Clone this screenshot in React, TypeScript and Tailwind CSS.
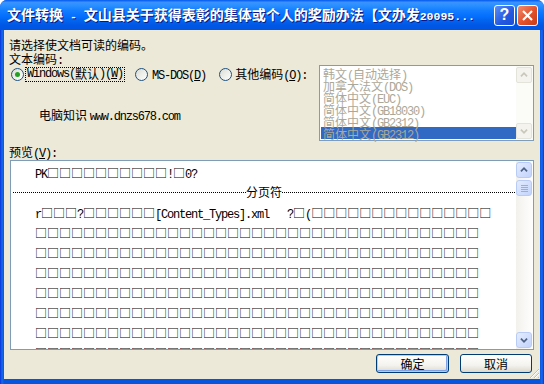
import React from "react";

const ascii = "font-['Liberation_Mono',monospace] text-[12px] tracking-[-1.2px]";
const cjk = "font-['Noto_Sans_CJK_SC',sans-serif] text-[12px]";

// splits a string into ascii / cjk runs so each gets its own width
const Mix = ({ s, a = ascii, c = cjk }: { s: string; a?: string; c?: string }) => {
  const parts = s.match(/[\x00-\x7f]+|[^\x00-\x7f]+/g) || [];
  return (
    <>
      {parts.map((p, i) => (
        <span key={i} className={/^[\x00-\x7f]/.test(p) ? a : c}>
          {p}
        </span>
      ))}
    </>
  );
};

const Radio = ({ checked = false }: { checked?: boolean }) => (
  <span className="w-[13px] h-[13px] rounded-full border border-[#1c5180] bg-[linear-gradient(135deg,#dcdcd5,#ffffff)] flex items-center justify-center shrink-0">
    {checked && <span className="w-[5px] h-[5px] rounded-full bg-[#21a121]" />}
  </span>
);

const Chevron = ({ up, color }: { up?: boolean; color: string }) => (
  <svg width="16" height="16" viewBox="0 0 16 16">
    <polyline
      points={up ? "4.5,9.5 8,6 11.5,9.5" : "4.5,6.5 8,10 11.5,6.5"}
      fill="none"
      stroke={color}
      strokeWidth="2"
    />
  </svg>
);

const box = (n: number) => "□".repeat(n);

export default function App() {
  const rows = [box(37), box(37), box(37), box(37), box(37), box(37), box(37)];
  const items = ["韩文(自动选择)", "加拿大法文(DOS)", "简体中文(EUC)", "简体中文(GB18030)", "简体中文(GB2312)"];

  return (
    <div className="w-[544px] h-[384px] flex flex-col bg-[linear-gradient(to_right,#0831d9,#166aee_2px,#0855dd_4px,#0855dd_540px,#166aee_542px,#0831d9)] rounded-t-[7px] overflow-hidden">
      {/* title bar */}
      <div className="h-[30px] shrink-0 flex items-center pl-[7px] pr-[6px] bg-[linear-gradient(to_bottom,#0058ee_0%,#3a93ff_8%,#288eff_20%,#127dff_35%,#036ffc_55%,#0262ee_70%,#0057e5_85%,#0054e3_100%)]">
        <div className="flex-1 whitespace-nowrap overflow-hidden text-white leading-[22px] [text-shadow:1px_1px_0_#0a1883]">
          <Mix
            s="文件转换 -  文山县关于获得表彰的集体或个人的奖励办法【文办发20095..."
            a="font-['Liberation_Mono',monospace] text-[11.5px] font-bold"
            c="font-['Noto_Sans_CJK_SC',sans-serif] text-[14px] font-bold"
          />
        </div>
        <div className="flex gap-[2px] ml-[6px]">
          <div className="w-[21px] h-[21px] rounded-[3px] border border-white bg-[linear-gradient(135deg,#5b8ff5,#2358e0_60%,#1d4fd6)] flex items-center justify-center text-white font-['Liberation_Sans',sans-serif] font-bold text-[16px] leading-none">
            ?
          </div>
          <div className="w-[21px] h-[21px] rounded-[3px] border border-white bg-[linear-gradient(135deg,#f08d6e,#e2502a_55%,#c83c17)] flex items-center justify-center">
            <svg width="13" height="13" viewBox="0 0 13 13">
              <path d="M2 2L11 11M11 2L2 11" stroke="white" strokeWidth="2.2" />
            </svg>
          </div>
        </div>
      </div>

      {/* client */}
      <div className="relative flex-1 mx-[4px] mb-[5px] bg-[#ece9d8] flex flex-col pl-[5px] pr-[6px] text-black leading-[14px]">
        <div className="mt-[7px] h-[14px]">
          <Mix s="请选择使文档可读的编码。" />
        </div>
        <div className="h-[14px]">
          <Mix s="文本编码:" />
        </div>

        <div className="flex h-[76px]">
          <div className="flex-1 flex flex-col">
            <div className="mt-[2px] h-[14px] flex items-center">
              <span className="ml-[2px]">
                <Radio checked />
              </span>
              <span className="ml-[1px] border border-dotted border-black px-[1px] h-[15px] flex items-center whitespace-nowrap">
                <span className={ascii}>Windows(</span>
                <span className={cjk}>默认</span>
                <span className={ascii}>)(</span>
                <span className={ascii + " underline"}>W</span>
                <span className={ascii}>)</span>
              </span>
              <span className="ml-[10px]">
                <Radio />
              </span>
              <span className="ml-[4px] whitespace-nowrap">
                <span className={ascii}>MS-DOS(</span>
                <span className={ascii + " underline"}>D</span>
                <span className={ascii}>)</span>
              </span>
              <span className="ml-[13px]">
                <Radio />
              </span>
              <span className="ml-[3px] whitespace-nowrap">
                <span className={cjk}>其他编码</span>
                <span className={ascii}>(</span>
                <span className={ascii + " underline"}>O</span>
                <span className={ascii}>):</span>
              </span>
            </div>
            <div className="mt-[27px] ml-[30px] h-[12px] leading-[12px] whitespace-nowrap">
              <span className={cjk}>电脑知识 </span>
              <span className={ascii}>www.dnzs678.com</span>
            </div>
          </div>

          {/* disabled listbox */}
          <div className="w-[215px] h-[76px] border border-[#7f9db9] bg-white flex">
            <div className="flex-1 pt-[1px] pl-[1px] text-[#aca899] leading-[12px]">
              {items.map((t) => (
                <div key={t} className="h-[12px] pl-[2px] whitespace-nowrap">
                  <Mix s={t} />
                </div>
              ))}
              <div className="h-[12px] pl-[2px] whitespace-nowrap bg-[#316ac5]">
                <Mix s="简体中文(GB2312)" />
              </div>
            </div>
            <div className="w-[17px] bg-[#fbfbf8] flex flex-col justify-between py-[1px]">
              <div className="w-[16px] h-[16px] rounded-[2px] border border-[#e4e3da] bg-[#f4f3ee] flex items-center justify-center">
                <Chevron up color="#c9c7ba" />
              </div>
              <div className="w-[16px] h-[16px] rounded-[2px] border border-[#e4e3da] bg-[#f4f3ee] flex items-center justify-center">
                <Chevron color="#c9c7ba" />
              </div>
            </div>
          </div>
        </div>

        <div className="mt-[3px] h-[14px]">
          <span className={cjk}>预览</span>
          <span className={ascii}>(</span>
          <span className={ascii + " underline"}>V</span>
          <span className={ascii}>):</span>
        </div>

        {/* preview */}
        <div className="mt-[2px] ml-[1px] h-[190px] border border-[#7f9db9] bg-white flex">
          <div className="flex-1 overflow-hidden pt-[1px] pl-[24px] leading-[20px] whitespace-pre">
            <div className="h-[20px]">
              <Mix s={"PK" + box(10) + "!" + box(1) + "0?"} />
            </div>
            <div className="h-[20px] -ml-[22px] mr-[1px] flex items-center">
              <div className="flex-1 border-t border-dotted border-black" />
              <span className={cjk}>分页符</span>
              <div className="flex-1 border-t border-dotted border-black" />
            </div>
            <div className="h-[20px]">
              <Mix s={"r" + box(3) + "?" + box(6) + "[Content_Types].xml   ?" + box(1) + "(" + box(15)} />
            </div>
            {rows.map((r, i) => (
              <div key={i} className="h-[20px]">
                <Mix s={r} />
              </div>
            ))}
          </div>
          <div className="w-[17px] bg-[linear-gradient(to_right,#f3f1ec,#fefefe)] flex flex-col py-[1px]">
            <div className="w-[16px] h-[16px] rounded-[3px] border border-[#b8cbf6] bg-[linear-gradient(135deg,#e4ecfe,#c2d3fc)] flex items-center justify-center">
              <Chevron up color="#4d6185" />
            </div>
            <div className="mt-[2px] w-[16px] h-[16px] rounded-[3px] border border-[#b8cbf6] bg-[linear-gradient(135deg,#e4ecfe,#c2d3fc)] flex flex-col items-center justify-center gap-[1px]">
              <div className="w-[7px] h-[1px] bg-[#8cb0f8]" />
              <div className="w-[7px] h-[1px] bg-[#8cb0f8]" />
              <div className="w-[7px] h-[1px] bg-[#8cb0f8]" />
              <div className="w-[7px] h-[1px] bg-[#8cb0f8]" />
            </div>
            <div className="flex-1" />
            <div className="w-[16px] h-[16px] rounded-[3px] border border-[#b8cbf6] bg-[linear-gradient(135deg,#e4ecfe,#c2d3fc)] flex items-center justify-center">
              <Chevron color="#4d6185" />
            </div>
          </div>
        </div>

        {/* buttons */}
        <div className="mt-[4px] mr-[2px] flex justify-end gap-[11px]">
          <button className="w-[73px] h-[19px] rounded-[3px] border border-[#003c74] bg-[linear-gradient(to_bottom,#ffffff,#f4f3ee_60%,#dcd8cb)] shadow-[inset_0_0_0_1px_#b5cdf5,inset_-1px_-1px_0_1px_#7da2ea] flex items-center justify-center leading-none">
            <span className={cjk}>确定</span>
          </button>
          <button className="w-[72px] h-[19px] rounded-[3px] border border-[#003c74] bg-[linear-gradient(to_bottom,#ffffff,#f4f3ee_60%,#dcd8cb)] flex items-center justify-center leading-none">
            <span className={cjk}>取消</span>
          </button>
        </div>

        {/* resize grip */}
        <svg className="absolute right-0 bottom-0" width="12" height="12" viewBox="0 0 12 12">
          <path d="M11 2L2 11M11 6L6 11M11 10L10 11" stroke="#c2bfae" strokeWidth="1" />
          <path d="M11 3L3 11M11 7L7 11" stroke="#ffffff" strokeWidth="1" />
        </svg>
      </div>
    </div>
  );
}
